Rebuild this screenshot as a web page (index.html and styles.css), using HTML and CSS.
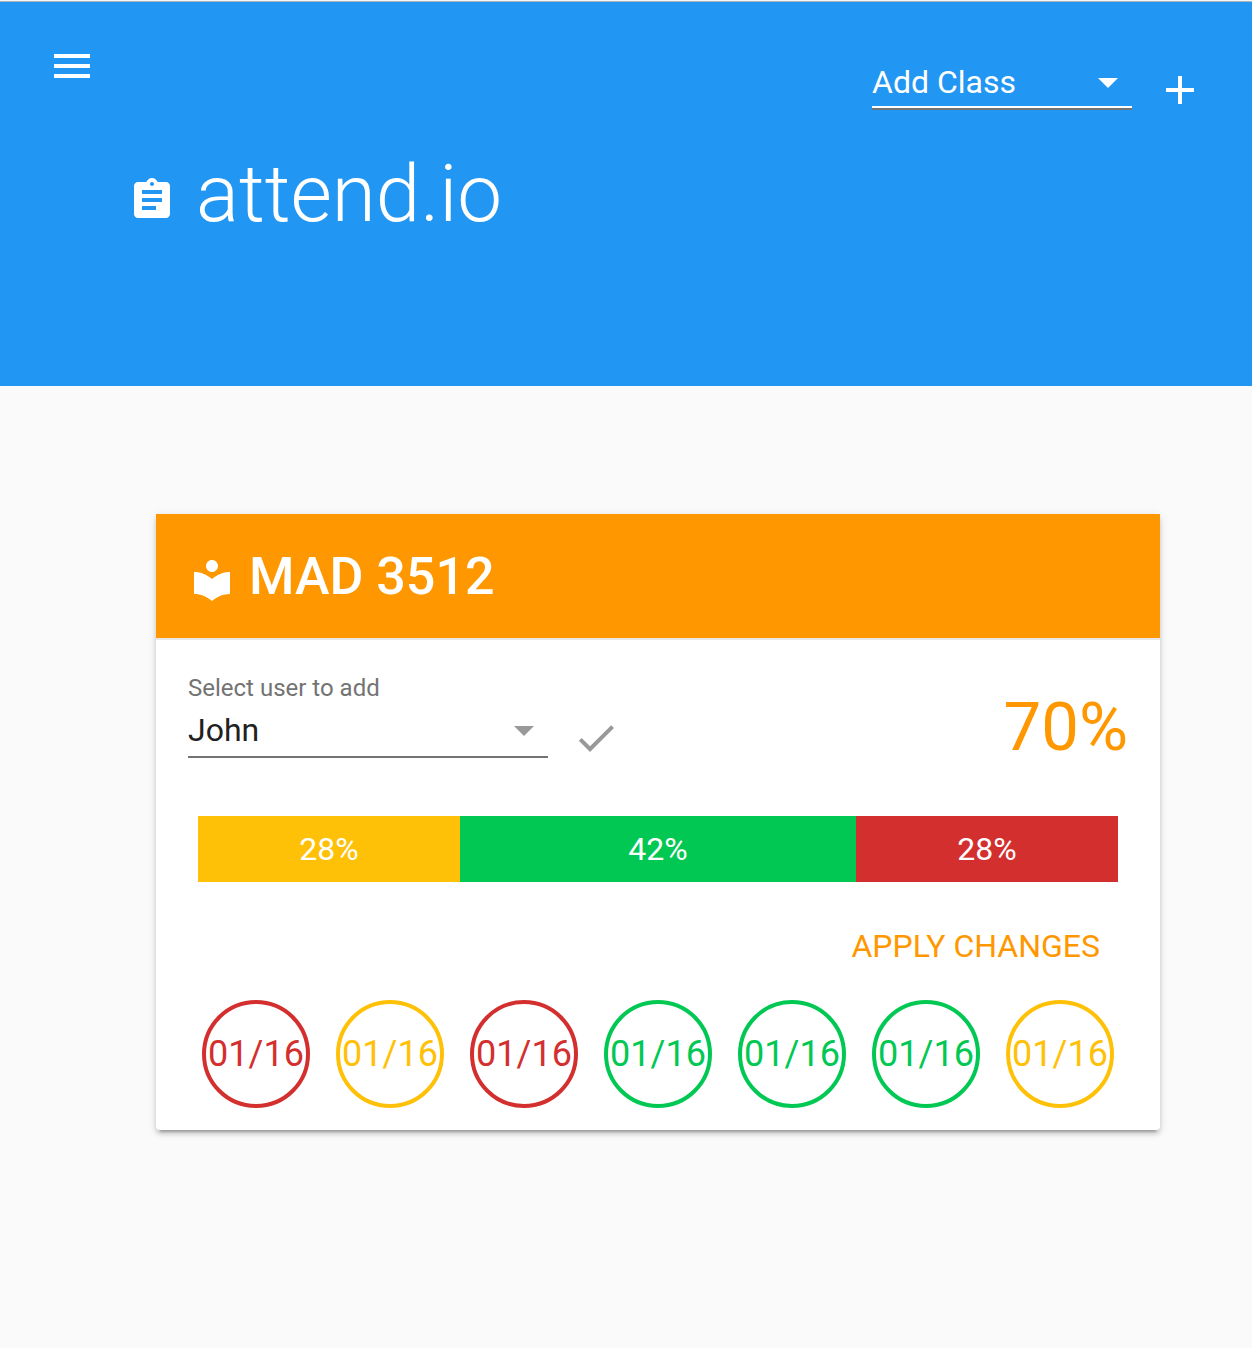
FILE: index.html
```html
<!DOCTYPE html>
<html lang="en">
<head>
  <meta charset="utf-8">
  <meta name="viewport" content="width=device-width, initial-scale=1">
  <title>attend.io</title>
  <link rel="stylesheet" href="styles.css">
</head>
<body>
  <header class="header">
    <div class="toolbar">
      <button class="icon-button" type="button" aria-label="Menu">
        <svg class="icon" viewBox="0 0 24 24"><path d="M3 18h18v-2H3v2zm0-5h18v-2H3v2zm0-7v2h18V6H3z"/></svg>
      </button>
      <div class="class-picker">
        <div class="dropdown dropdown-light">
          <select class="dropdown-select" aria-label="Class">
            <option>Add Class</option>
          </select>
          <svg class="icon dropdown-arrow" viewBox="0 0 24 24"><path d="M7 10l5 5 5-5z"/></svg>
        </div>
        <button class="icon-button icon-button-low" type="button" aria-label="Add class">
          <svg class="icon" viewBox="0 0 24 24"><path d="M19 13h-6v6h-2v-6H5v-2h6V5h2v6h6v2z"/></svg>
        </button>
      </div>
    </div>
    <div class="brand">
      <svg class="icon" viewBox="0 0 24 24"><path d="M19 3h-4.18C14.4 1.84 13.3 1 12 1c-1.3 0-2.4.84-2.82 2H5c-1.1 0-2 .9-2 2v14c0 1.1.9 2 2 2h14c1.1 0 2-.9 2-2V5c0-1.1-.9-2-2-2zm-7 0c.55 0 1 .45 1 1s-.45 1-1 1-1-.45-1-1 .45-1 1-1zm2 14H7v-2h7v2zm3-4H7v-2h10v2zm0-4H7V7h10v2z"/></svg>
      <h1 class="brand-name">attend.io</h1>
    </div>
  </header>

  <main class="content">
    <section class="card">
      <div class="card-header">
        <svg class="icon" viewBox="0 0 24 24"><path d="M12 11.55C9.64 9.35 6.48 8 3 8v11c3.48 0 6.64 1.35 9 3.55 2.36-2.19 5.52-3.55 9-3.55V8c-3.48 0-6.64 1.35-9 3.55zM12 8c1.66 0 3-1.34 3-3s-1.34-3-3-3-3 1.34-3 3 1.34 3 3 3z"/></svg>
        <h2 class="card-title">MAD 3512</h2>
      </div>

      <div class="user-row">
        <div class="user-field">
          <label class="field-label" for="user">Select user to add</label>
          <div class="dropdown">
            <select class="dropdown-select" id="user">
              <option>John</option>
            </select>
            <svg class="icon dropdown-arrow" viewBox="0 0 24 24"><path d="M7 10l5 5 5-5z"/></svg>
          </div>
        </div>
        <button class="icon-button icon-button-low confirm" type="button" aria-label="Add user">
          <svg class="icon" viewBox="0 0 24 24"><path d="M9 16.17L4.83 12l-1.42 1.41L9 19 21 7l-1.41-1.41z"/></svg>
        </button>
        <strong class="score">70%</strong>
      </div>

      <div class="ratio">
        <div class="ratio-part late" style="flex-grow: 262">28%</div>
        <div class="ratio-part present" style="flex-grow: 396">42%</div>
        <div class="ratio-part absent" style="flex-grow: 262">28%</div>
      </div>

      <div class="actions">
        <button class="text-button" type="button">APPLY CHANGES</button>
      </div>

      <div class="days">
        <button class="day day-absent" type="button">01/16</button>
        <button class="day day-late" type="button">01/16</button>
        <button class="day day-absent" type="button">01/16</button>
        <button class="day day-present" type="button">01/16</button>
        <button class="day day-present" type="button">01/16</button>
        <button class="day day-present" type="button">01/16</button>
        <button class="day day-late" type="button">01/16</button>
      </div>
    </section>
  </main>
</body>
</html>
```
FILE: styles.css
```css
:root {
  --blue: #2196f3;
  --orange: #ff9800;
  --amber: #ffc107;
  --green: #00c853;
  --red: #d32f2f;
  --grey: #737373;
}

* {
  box-sizing: border-box;
}

body {
  margin: 0;
  background: #fafafa;
  color: #212121;
  font-family: Roboto, "Liberation Sans", sans-serif;
  font-size: 32px;
  line-height: 48px;
}

button,
select {
  margin: 0;
  padding: 0;
  border: 0;
  background: none;
  color: inherit;
  font: inherit;
  cursor: pointer;
}

.icon {
  display: block;
  flex: none;
  width: 48px;
  height: 48px;
  fill: currentColor;
}

.icon-button {
  flex: none;
}

.icon-button-low {
  margin-bottom: -4px;
}

/* Header */

.header {
  min-height: 386px;
  padding: 41px 48px 160px;
  border-top: 1px solid #f5f5f5;
  background: var(--blue);
  box-shadow: inset 0 1px #a9b4bd;
  color: #fff;
}

.toolbar {
  display: flex;
  align-items: flex-start;
  justify-content: space-between;
}

.class-picker {
  display: flex;
  align-items: flex-end;
  gap: 24px;
  padding-top: 16px;
}

.dropdown {
  display: grid;
  align-items: start;
  border-bottom: 2px solid var(--grey);
}

.dropdown > * {
  grid-area: 1 / 1;
}

.dropdown-select {
  width: 100%;
  height: 50px;
  padding: 0 48px 4px 0;
  appearance: none;
}

.dropdown-arrow {
  justify-self: end;
  color: #999;
  pointer-events: none;
}

.dropdown-light {
  width: 260px;
}

.dropdown-light .dropdown-select {
  padding-bottom: 2px;
  border-bottom: 2px solid #fff;
}

.dropdown-light .dropdown-arrow {
  color: #fff;
}

.brand {
  display: flex;
  align-items: flex-end;
  gap: 20px;
  padding: 54px 80px 0;
}

.brand-name {
  margin: 0;
  font-size: 80px;
  font-weight: 300;
  line-height: 60px;
}

/* Class card */

.content {
  padding: 128px 92px 128px 156px;
}

.card {
  padding-bottom: 22px;
  border-radius: 4px;
  background: #fff;
  box-shadow: 0 4px 4px rgba(0, 0, 0, 0.14), 0 2px 10px rgba(0, 0, 0, 0.12), 0 6px 2px -4px rgba(0, 0, 0, 0.2);
}

.card-header {
  display: flex;
  align-items: flex-end;
  gap: 13px;
  padding: 36px 32px 34px;
  border-bottom: 2px solid #e8e8e8;
  background: var(--orange);
  background-clip: padding-box;
  color: #fff;
}

.card-title {
  margin: 0;
  font-size: 52px;
  font-weight: 500;
  line-height: 54px;
}

.user-row {
  display: flex;
  align-items: flex-end;
  gap: 24px;
  padding: 32px 32px 58px;
}

.user-field {
  flex: 0 1 360px;
}

.field-label {
  display: block;
  margin-bottom: 2px;
  color: var(--grey);
  font-size: 24px;
  line-height: 32px;
}

.confirm {
  color: #999;
}

.score {
  margin-left: auto;
  color: var(--orange);
  font-size: 67px;
  font-weight: 400;
  line-height: 62px;
}

.ratio {
  display: flex;
  margin: 0 42px;
}

.ratio-part {
  flex: 0 1 0;
  color: #fff;
  line-height: 66px;
  text-align: center;
}

.late {
  background: var(--amber);
}

.present {
  background: var(--green);
}

.absent {
  background: var(--red);
}

.actions {
  display: flex;
  justify-content: flex-end;
  padding: 40px 60px 30px;
}

.text-button {
  color: var(--orange);
}

.days {
  display: flex;
  flex-wrap: wrap;
  justify-content: space-between;
  gap: 24px;
  padding: 0 46px;
}

.day {
  width: 108px;
  height: 108px;
  border: 4px solid;
  border-radius: 50%;
  font-size: 36px;
}

.day-absent {
  color: var(--red);
}

.day-late {
  color: var(--amber);
}

.day-present {
  color: var(--green);
}
```
